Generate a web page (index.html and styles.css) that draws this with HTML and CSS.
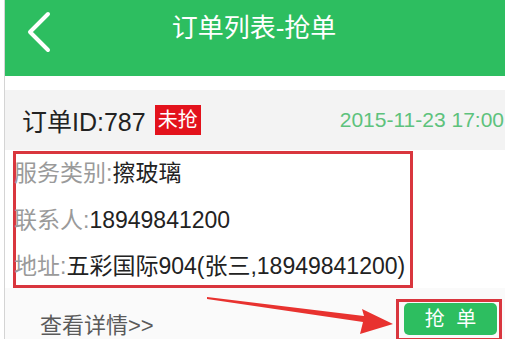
FILE: index.html
```html
<!DOCTYPE html>
<html lang="zh">
<head>
<meta charset="utf-8">
<link rel="stylesheet" href="styles.css">
</head>
<body>
<div class="page">
  <header class="topbar">
    <svg class="back" width="26" height="42" viewBox="0 0 26 42"><polyline points="22,3 4,21 22,39" fill="none" stroke="#fff" stroke-width="4" stroke-linecap="round" stroke-linejoin="round"/></svg>
    <h1 class="title">订单列表-抢单</h1>
  </header>
  <div class="gap"></div>
  <div class="order-head">
    <span class="order-id">订单ID:787</span>
    <span class="badge">未抢</span>
    <span class="date">2015-11-23 17:00</span>
  </div>
  <div class="order-body">
    <div class="info-box">
      <div class="rows">
        <div class="row"><span class="label">服务类别:</span><span class="value">擦玻璃</span></div>
        <div class="row"><span class="label">联系人:</span><span class="value">18949841200</span></div>
        <div class="row"><span class="label">地址:</span><span class="value">五彩国际904(张三,18949841200)</span></div>
      </div>
    </div>
  </div>
  <div class="footer">
    <span class="detail">查看详情&gt;&gt;</span>
    <div class="btn-mark"><div class="grab-btn">抢 单</div></div>
  </div>
  <svg class="arrow" width="505" height="339" viewBox="0 0 505 339"><polygon points="207,297 364,316 362,309 393,324 360,334 363,322 207,299" fill="#e8322f"/></svg>
</div>
</body>
</html>
```
FILE: styles.css
```css
* { box-sizing: border-box; margin: 0; padding: 0; }
html, body { width: 505px; height: 339px; overflow: hidden; background: #fff; }
body { font-family: "Liberation Sans", "Noto Sans CJK SC", sans-serif; }
.page {
  position: relative;
  margin-left: 4px;
  border-left: 1px solid #d4d4d4;
  height: 339px;
  overflow: hidden;
}
.topbar {
  height: 76px;
  background: #2dbe60;
  display: flex;
  align-items: flex-start;
  padding-top: 11px;
  position: relative;
}
.back { margin-left: 21px; }
.title {
  position: absolute;
  left: 0; right: 0; top: 11px;
  text-align: center;
  color: #fff;
  font-weight: normal;
  font-size: 26px;
  line-height: 34px;
  padding-right: 2px;
}
.gap { height: 14px; background: #fff; }
.order-head {
  height: 60px;
  background: #f3f3f3;
  display: flex;
  align-items: center;
  padding-left: 17px;
  white-space: nowrap;
}
.order-id { font-size: 25px; color: #222; }
.badge {
  margin-left: 9px;
  background: #e3121c;
  color: #fff;
  font-size: 20px;
  line-height: 30px;
  padding: 0 3px;
}
.date {
  margin-left: auto;
  color: #5dc27c;
  font-size: 21px;
  margin-right: 1px;
}
.order-body { padding: 1px 0 0 8px; background: #fff; }
.info-box {
  width: 400px;
  height: 137px;
  border: 3px solid #d9363e;
}
.rows { margin-top: -4px; display: flex; flex-direction: column; }
.row {
  flex: none;
  height: 46.5px;
  line-height: 46.5px;
  font-size: 23px;
  margin-left: -2px;
  white-space: nowrap;
}
.label { color: #9a9a9a; }
.value { color: #222; }
.footer {
  display: flex;
  justify-content: space-between;
  align-items: flex-start;
  padding-left: 35px;
  background: #fafafa;
  height: 51px;
}
.detail { font-size: 22px; color: #5a5a5a; margin-top: 19px; }
.btn-mark {
  margin-top: 11px;
  margin-right: 3px;
  border: 3px solid #d9363e;
  width: 106px;
  height: 42px;
  padding: 1px 2px 0 5px;
}
.grab-btn {
  height: 32px;
  background: #2dbe60;
  border-radius: 5px;
  color: #fff;
  font-size: 20px;
  line-height: 32px;
  text-align: center;
  word-spacing: 6px;
}
.arrow { position: absolute; left: -5px; top: 0; pointer-events: none; }
```
